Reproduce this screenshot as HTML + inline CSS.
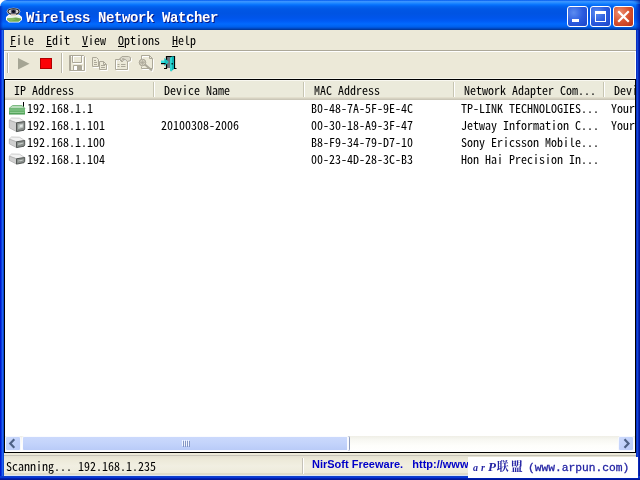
<!DOCTYPE html>
<html><head><meta charset="utf-8"><title>Wireless Network Watcher</title>
<style>
html,body{margin:0;padding:0;}
body{width:640px;height:480px;overflow:hidden;position:relative;background:#ECE9D8;font-family:"Noto Sans Mono CJK SC","IPAGothic","Liberation Mono",monospace;font-size:12px;line-height:12px;color:#000;}
div,span,svg{position:absolute;box-sizing:border-box;white-space:pre;}
.t{height:12px;line-height:12px;will-change:transform;}
u{text-decoration:none;border-bottom:1px solid #000;display:inline-block;height:12px;line-height:12px;}
#title{left:0;top:0;width:640px;height:30px;border-radius:7px 0 0 0;
background:linear-gradient(to bottom,#0058EE 0%,#3A93FF 5%,#288EFF 9%,#127DFF 13%,#036FFC 17%,#0262EE 22%,#0057E5 30%,#0054E3 45%,#0055EB 60%,#005BF5 70%,#026AFE 80%,#0062EF 88%,#0052D6 93%,#0040AB 97%,#003092 100%);}
#bl{left:0;top:30px;width:4px;height:450px;background:linear-gradient(to right,#0019CF 0,#0019CF 25%,#0A3CE0 25%,#0A3CE0 50%,#2062F0 50%,#2062F0 75%,#0F4AD0 75%);}
#br{left:636px;top:30px;width:4px;height:450px;background:linear-gradient(to right,#0A2EC2 0,#0A2EC2 25%,#1248D8 25%,#1248D8 50%,#0A28B8 50%,#0A28B8 75%,#00189C 75%);}
#bb{left:0;top:476px;width:640px;height:4px;background:linear-gradient(to bottom,#1040C8 0,#1040C8 25%,#0838D8 25%,#0838D8 50%,#0020B0 50%,#0020B0 75%,#00189A 75%);}
#ttext{left:26px;top:10px;height:16px;line-height:16px;font-family:"Liberation Mono",monospace;font-size:14px;font-weight:bold;color:#fff;letter-spacing:-0.4px;text-shadow:1px 1px 0 #0A1883;will-change:transform;}
.cb{top:6px;width:21px;height:21px;border:1px solid #fff;border-radius:3px;background:radial-gradient(circle at 30% 30%,#5C8CF0 0,#2B5CDF 50%,#1C44C8 100%);}
#cclose{background:radial-gradient(circle at 30% 30%,#EE9073 0,#D8522F 50%,#B8301A 100%);}
.hs{top:82px;width:2px;height:15px;border-left:1px solid #C7C5B2;border-right:1px solid #fff;}
#status{will-change:transform;font:bold 11px "Liberation Sans",sans-serif;color:#0000C8;}
</style></head><body>
<div style="left:0;top:0;width:8px;height:8px;background:#fff"></div>
<div id="title"></div>
<div style="left:630px;top:0;width:10px;height:10px;background:radial-gradient(circle at 0 100%,rgba(0,40,160,0) 0,rgba(0,40,160,0) 60%,rgba(0,30,150,0.9) 100%)"></div>
<div style="left:636px;top:4px;width:4px;height:26px;background:linear-gradient(to right,rgba(0,30,170,0.15),rgba(0,20,160,0.75))"></div>
<div style="left:0;top:6px;width:3px;height:24px;background:linear-gradient(to left,rgba(0,30,170,0),rgba(0,20,160,0.6))"></div>
<div id="bl"></div><div id="br"></div><div id="bb"></div>
<svg width="20" height="18" style="left:4px;top:6px">
 <polygon points="2,11 5,8.5 15,8.5 18,11 18,14 15,16.500 5,16.500 2,14" fill="#fff"/>
 <polygon points="3,11.5 5.5,9.5 14.500,9.5 17,11.5 17,13 3,13" fill="#E9F3E4"/>
 <polygon points="3,12.5 12,11.5 17,12.5 17,14 14.500,15.800 5.5,15.800 3,14" fill="#6FA852"/>
 <polygon points="3,12.500 9,12 12,13.500 7,15 3,14" fill="#86BC62"/>
 <ellipse cx="9.5" cy="5.500" rx="6.800" ry="3.800" fill="#fff" fill-opacity="0.85"/>
 <ellipse cx="9.5" cy="5.500" rx="5.600" ry="2.800" fill="#D8D4D0" stroke="#111" stroke-width="1.1"/>
 <circle cx="9.5" cy="5.500" r="2.700" fill="#5B5F76"/>
 <circle cx="9.500" cy="5.500" r="1.600" fill="#0C0C18"/>
 <rect x="7" y="8" width="5" height="1.500" fill="#C9B9A9"/>
</svg>
<div id="ttext">Wireless Network Watcher</div>
<div class="cb" style="left:567px"><div style="left:4px;top:12px;width:7px;height:3px;background:#fff"></div></div>
<div class="cb" style="left:590px"><div style="left:4px;top:4px;width:11px;height:11px;border:1px solid #fff;border-top-width:3px"></div></div>
<div class="cb" id="cclose" style="left:613px"><svg width="19" height="19" style="left:0;top:0"><path d="M5 5 L14 14 M14 5 L5 14" stroke="#fff" stroke-width="2.2" stroke-linecap="square"/></svg></div>

<div class="t" style="left:10px;top:34px"><u>F</u>ile</div>
<div class="t" style="left:46px;top:34px"><u>E</u>dit</div>
<div class="t" style="left:82px;top:34px"><u>V</u>iew</div>
<div class="t" style="left:118px;top:34px"><u>O</u>ptions</div>
<div class="t" style="left:172px;top:34px"><u>H</u>elp</div>

<!-- toolbar -->
<div style="left:4px;top:50px;width:632px;height:1px;background:#ACA899"></div>
<div style="left:4px;top:51px;width:632px;height:1px;background:#fff"></div>
<div style="left:4px;top:52px;width:1px;height:27px;background:#fff"></div>
<div style="left:635px;top:52px;width:1px;height:27px;background:#fff"></div>
<div style="left:7px;top:53px;width:1px;height:20px;background:#B9B6A7"></div>
<div style="left:8px;top:53px;width:1px;height:20px;background:#fff"></div>
<div style="left:61px;top:53px;width:1px;height:20px;background:#B9B6A7"></div>
<div style="left:62px;top:53px;width:1px;height:20px;background:#fff"></div>
<svg id="tb" width="200" height="28" style="left:0;top:51px">
 <polygon points="18,7 18,18.5 29.5,12.7" fill="#A5A594"/>
 <rect x="40.5" y="7.5" width="11" height="10" fill="#FB0207" stroke="#B00000"/>
 <!-- save -->
 <g fill="none" stroke="#fff" stroke-width="1" transform="translate(1,1)">
  <path d="M69.5 4.5 H83.5 L84.5 5.5 V19.5 H69.5 Z M72.5 4.5 V11.5 H81.5 V4.5 M73.5 19.5 V14.5 H81.5 V19.5"/>
 </g>
 <g fill="none" stroke="#ACA899" stroke-width="1">
  <path d="M69.5 4.5 H83.5 L84.5 5.5 V19.5 H69.5 Z M72.5 4.5 V11.5 H81.5 V4.5 M73.5 19.5 V14.5 H81.5 V19.5"/>
  <path d="M70.5 4.5 V19.5" />
 </g>
 <rect x="77" y="15" width="4" height="4" fill="#ACA899"/>
 <rect x="75" y="16" width="2" height="3" fill="#fff"/>
 <!-- copy -->
 <g fill="#ECE9D8" stroke="#fff" stroke-width="1" transform="translate(1,1)">
  <path d="M92.5 6.5 H96.5 L98.5 8.5 V15.5 H92.5 Z"/>
  <path d="M99.5 10.5 H103.5 L106.5 13.5 V18.5 H99.5 Z"/>
 </g>
 <g fill="#ECE9D8" stroke="#ACA899" stroke-width="1">
  <path d="M92.5 6.5 H96.5 L98.5 8.5 V15.5 H92.5 Z"/>
  <path d="M99.5 10.5 H103.5 L106.5 13.5 V18.5 H99.5 Z"/>
  <path d="M94 9.5 H96 M94 11.5 H97 M94 13.5 H97 M101 14.5 H105 M101 16.5 H105 M103.5 10.5 V13.5 H106.5" fill="none"/>
 </g>
 <!-- properties -->
 <g fill="none" stroke="#fff" stroke-width="1" transform="translate(1,1)">
  <path d="M115.5 8.5 H127.5 V18.5 H115.5 Z"/>
  <path d="M122 5.5 H128.5 L130.5 6.5 V9.5 L127.5 10.5"/>
 </g>
 <g fill="none" stroke="#ACA899" stroke-width="1">
  <path d="M115.5 8.5 H127.5 V18.5 H115.5 Z"/>
  <path d="M117.5 13.5 H119.5 M121 13.5 H125.5 M117.5 15.5 H119.5 M121 15.5 H125.5"/>
  <path d="M118 9.500 L122 5.5 H128.5 L130.5 6.5 V9.5 L127.5 10.5 L124.5 8 L122 11 L120 9" fill="#DEDBCC"/>
  <path d="M120 8 L122.5 10.5 M121.5 6.5 L124.5 9.500 M119 9 L121.500 6.5 M121 10 L124 7" stroke-width="0.7"/>
 </g>
 <!-- find -->
 <g fill="none" stroke="#fff" stroke-width="1" transform="translate(1,1)">
  <path d="M141.5 8 V4.5 H149.5 L152.5 7.5 V17.5 H141.5 V15.5"/>
  <path d="M145 13 L152 19.5" stroke-width="2"/>
 </g>
 <g fill="none" stroke="#ACA899" stroke-width="1">
  <path d="M141.5 8 V4.5 H149.5 L152.5 7.5 V17.5 H141.5 V15.5 M149.5 4.5 V7.5 H152.5"/>
  <circle cx="142.5" cy="11.5" r="3.3" fill="#D8D4C4"/>
  <path d="M140 9.5 L145 14 M140 13.5 L145 9.5 M142.5 8.5 V14.5 M139.5 11.5 H145.5" stroke-width="0.7"/>
  <path d="M145 13.5 L152 19.5" stroke-width="2.2"/>
 </g>
 <!-- exit -->
 <rect x="167" y="6" width="7" height="11" fill="#6E747C"/>
 <path d="M164 17.5 H166.5 V12.5 M166.5 10 V5.5 H174.5 V17.5 H176.5" fill="none" stroke="#000" stroke-width="1.2"/>
 <polygon points="170,7 173,5 174,6 174,18 171,20.5 170,19" fill="#12B4B4"/>
 <polygon points="170,7 172,5.6 172,19.6 171,20.5 170,19" fill="#2FD6D2"/>
 <rect x="171.5" y="12" width="1.5" height="1.5" fill="#033"/>
 <polygon points="161,9.5 164.5,9.5 164.5,7 168.5,11 164.5,15 164.5,12.5 161,12.5" fill="#35E0E0"/>
 <polygon points="164.500,7 168.5,11 164.5,15" fill="#19C4C0"/>
 <rect x="161" y="12" width="4.500" height="1.2" fill="#000"/>
</svg>

<div style="left:5px;top:78px;width:631px;height:1px;background:#F6F5EC"></div>
<!-- list -->
<div id="list" style="left:4px;top:79px;width:632px;height:374px;background:#fff;border:1px solid #000;"></div>
<div id="hdr" style="left:5px;top:80px;width:630px;height:20px;background:#EBEADB;border-bottom:1px solid #CBC7B8;box-shadow:inset 0 -1px 0 #D6D2C2,inset 0 -2px 0 #E2DECD,inset 0 1px 0 #F8F7F0"></div>

<div class="hs" style="left:153px"></div>
<div class="hs" style="left:303px"></div>
<div class="hs" style="left:453px"></div>
<div class="hs" style="left:603px"></div>
<div class="t" style="left:14px;top:84px">IP Address</div>
<div class="t" style="left:164px;top:84px">Device Name</div>
<div class="t" style="left:314px;top:84px">MAC Address</div>
<div class="t" style="left:464px;top:84px">Network Adapter Com...</div>
<div class="t" style="left:614px;top:84px;width:21px;overflow:hidden">Devi</div>
<div class="t" style="left:27px;top:102px">192.168.1.1</div>
<div class="t" style="left:311px;top:102px">B0-48-7A-5F-9E-4C</div>
<div class="t" style="left:461px;top:102px">TP-LINK TECHNOLOGIES...</div>
<div class="t" style="left:611px;top:102px;width:24px;overflow:hidden">Your</div>
<div class="t" style="left:27px;top:119px">192.168.1.101</div>
<div class="t" style="left:161px;top:119px">20100308-2006</div>
<div class="t" style="left:311px;top:119px">00-30-18-A9-3F-47</div>
<div class="t" style="left:461px;top:119px">Jetway Information C...</div>
<div class="t" style="left:611px;top:119px;width:24px;overflow:hidden">Your</div>
<div class="t" style="left:27px;top:136px">192.168.1.100</div>
<div class="t" style="left:311px;top:136px">B8-F9-34-79-D7-10</div>
<div class="t" style="left:461px;top:136px">Sony Ericsson Mobile...</div>
<div class="t" style="left:27px;top:153px">192.168.1.104</div>
<div class="t" style="left:311px;top:153px">00-23-4D-28-3C-B3</div>
<div class="t" style="left:461px;top:153px">Hon Hai Precision In...</div>

<svg width="20" height="14" style="left:7px;top:101px">
 <rect x="16" y="1" width="1" height="6" fill="#000"/>
 <polygon points="5.5,4.5 15,4.5 18,7.5 2,7.5" fill="#B9DCBB" stroke="#7DBB82" stroke-width="1"/>
 <rect x="2" y="7.5" width="16" height="5.5" fill="#66B36C"/>
 <rect x="2" y="8.5" width="16" height="1" fill="#86C68B"/>
 <rect x="3" y="11" width="14" height="1" fill="#8FCB93"/>
 <rect x="2" y="12.5" width="16" height="1" fill="#3F9349"/>
</svg>

<svg width="18" height="16" style="left:8px;top:117px"><polygon points="1.3,3.2 3.5,1.0 11.5,1.2 16.7,4.5 8.5,5.8" fill="#F2F2F2" stroke="#B9B9B9" stroke-width="0.7"/><polygon points="1.3,3.2 8.5,5.8 8.5,14.6 1.3,10.8" fill="#CFCFCF" stroke="#A9A9A9" stroke-width="0.7"/><polygon points="8.5,5.8 16.7,4.5 16.7,11.8 16.0,13.2 8.5,14.6" fill="#8A8F8C" stroke="#4A4E4C" stroke-width="0.9"/><polygon points="10.2,7.4 15.3,6.6 15.3,10.6 10.2,12.0" fill="#BFC6C2"/><polygon points="12.0,8.2 14.5,7.8 14.5,9.4 12.0,9.9" fill="#E6EAE8"/></svg>
<svg width="18" height="13" style="left:8px;top:136px"><polygon points="1.3,3.2 3.5,1.0 11.5,1.2 16.7,4.5 8.5,5.8" fill="#F2F2F2" stroke="#B9B9B9" stroke-width="0.7"/><polygon points="1.3,3.2 8.5,5.8 8.5,11.6 1.3,7.8" fill="#CFCFCF" stroke="#A9A9A9" stroke-width="0.7"/><polygon points="8.5,5.8 16.7,4.5 16.7,8.8 16.0,10.2 8.5,11.6" fill="#8A8F8C" stroke="#4A4E4C" stroke-width="0.9"/><polygon points="10.2,7.4 15.3,6.6 15.3,7.6 10.2,9.0" fill="#BFC6C2"/><polygon points="12.0,8.2 14.5,7.8 14.5,7.6 12.0,8.1" fill="#E6EAE8"/></svg>
<svg width="18" height="12" style="left:8px;top:153px"><polygon points="1.3,3.2 3.5,1.0 11.5,1.2 16.7,4.5 8.5,5.8" fill="#F2F2F2" stroke="#B9B9B9" stroke-width="0.7"/><polygon points="1.3,3.2 8.5,5.8 8.5,11.1 1.3,7.3" fill="#CFCFCF" stroke="#A9A9A9" stroke-width="0.7"/><polygon points="8.5,5.8 16.7,4.5 16.7,8.3 16.0,9.7 8.5,11.1" fill="#8A8F8C" stroke="#4A4E4C" stroke-width="0.9"/><polygon points="10.2,7.4 15.3,6.6 15.3,7.1 10.2,8.5" fill="#BFC6C2"/><polygon points="12.0,8.2 14.5,7.8 14.5,7.3 12.0,7.8" fill="#E6EAE8"/></svg>

<div style="left:5px;top:436px;width:630px;height:16px;background:linear-gradient(to bottom,#EFEEE6 0,#F8F8F3 25%,#FEFEFB 60%,#FFFFFF 100%)"></div>
<div style="left:5px;top:436px;width:16px;height:15px;border:1px solid #F6F8FE;border-radius:2px;background:linear-gradient(135deg,#CDDAFC 0,#C1D1FA 50%,#B9CBF8 100%)"></div>
<svg width="16" height="16" style="left:5px;top:436px"><path d="M9.3 3.300 L5.3 7.5 L9.3 11.700" fill="none" stroke="#4D6185" stroke-width="2.2"/></svg>
<div style="left:618px;top:436px;width:16px;height:15px;border:1px solid #F6F8FE;border-radius:2px;background:linear-gradient(135deg,#CDDAFC 0,#C1D1FA 50%,#B9CBF8 100%)"></div>
<svg width="16" height="16" style="left:618px;top:436px"><path d="M6.500 3.300 L10.500 7.5 L6.500 11.700" fill="none" stroke="#4D6185" stroke-width="2.2"/></svg>
<div style="left:22px;top:436px;width:327px;height:15px;border:1px solid #FAFBFF;border-right-width:2px;border-radius:2px;background:linear-gradient(to bottom,#CBD9FC 0,#C4D4FB 45%,#B9CBF8 100%);box-shadow:1px 0 0 #8E9CBD"></div>

<div style="left:182px;top:440px;width:1px;height:6px;background:#F2F6FF"></div><div style="left:183px;top:441px;width:1px;height:6px;background:#8496C4"></div>
<div style="left:184px;top:440px;width:1px;height:6px;background:#F2F6FF"></div><div style="left:185px;top:441px;width:1px;height:6px;background:#8496C4"></div>
<div style="left:186px;top:440px;width:1px;height:6px;background:#F2F6FF"></div><div style="left:187px;top:441px;width:1px;height:6px;background:#8496C4"></div>
<div style="left:188px;top:440px;width:1px;height:6px;background:#F2F6FF"></div><div style="left:189px;top:441px;width:1px;height:6px;background:#8496C4"></div>

<div style="left:4px;top:455px;width:632px;height:1px;background:#C5C2B8"></div>
<div style="left:4px;top:456px;width:632px;height:20px;background:linear-gradient(to bottom,#E4E1D2 0,#ECE9D8 15%,#F1EFE2 50%,#ECE9D8 100%)"></div>
<div style="left:4px;top:473px;width:632px;height:2px;background:#DFDCCA"></div>
<div style="left:4px;top:475px;width:632px;height:1px;background:#DCE5F6"></div>
<div style="left:302px;top:458px;width:1px;height:16px;background:#C5C2B8"></div>
<div style="left:303px;top:458px;width:1px;height:16px;background:#fff"></div>

<div class="t" style="left:6px;top:460px">Scanning... 192.168.1.235</div>
<div id="status" style="left:312px;top:457px;height:14px;line-height:14px;width:156px;overflow:hidden">NirSoft Freeware.   http://www</div>

<div style="left:468px;top:457px;width:170px;height:21px;background:#fff"></div>
<div style="left:473px;top:457px;height:20px;line-height:20px;will-change:transform;font-family:'Liberation Serif','Noto Serif CJK SC',serif;color:#2424A4;font-size:14px;"><i id="w1" style="font-size:10px;font-weight:bold;letter-spacing:3px">ar</i><i id="w2" style="font-size:13px;font-weight:bold;letter-spacing:1px">P</i><b id="w3" style="font-size:12px;letter-spacing:2px">联盟</b><span id="w4" style="position:static;margin-left:3px;font-family:'Liberation Mono',monospace;font-size:11.25px;-webkit-text-stroke:0.3px #2424A4">(www.arpun.com)</span></div>

</body></html>
